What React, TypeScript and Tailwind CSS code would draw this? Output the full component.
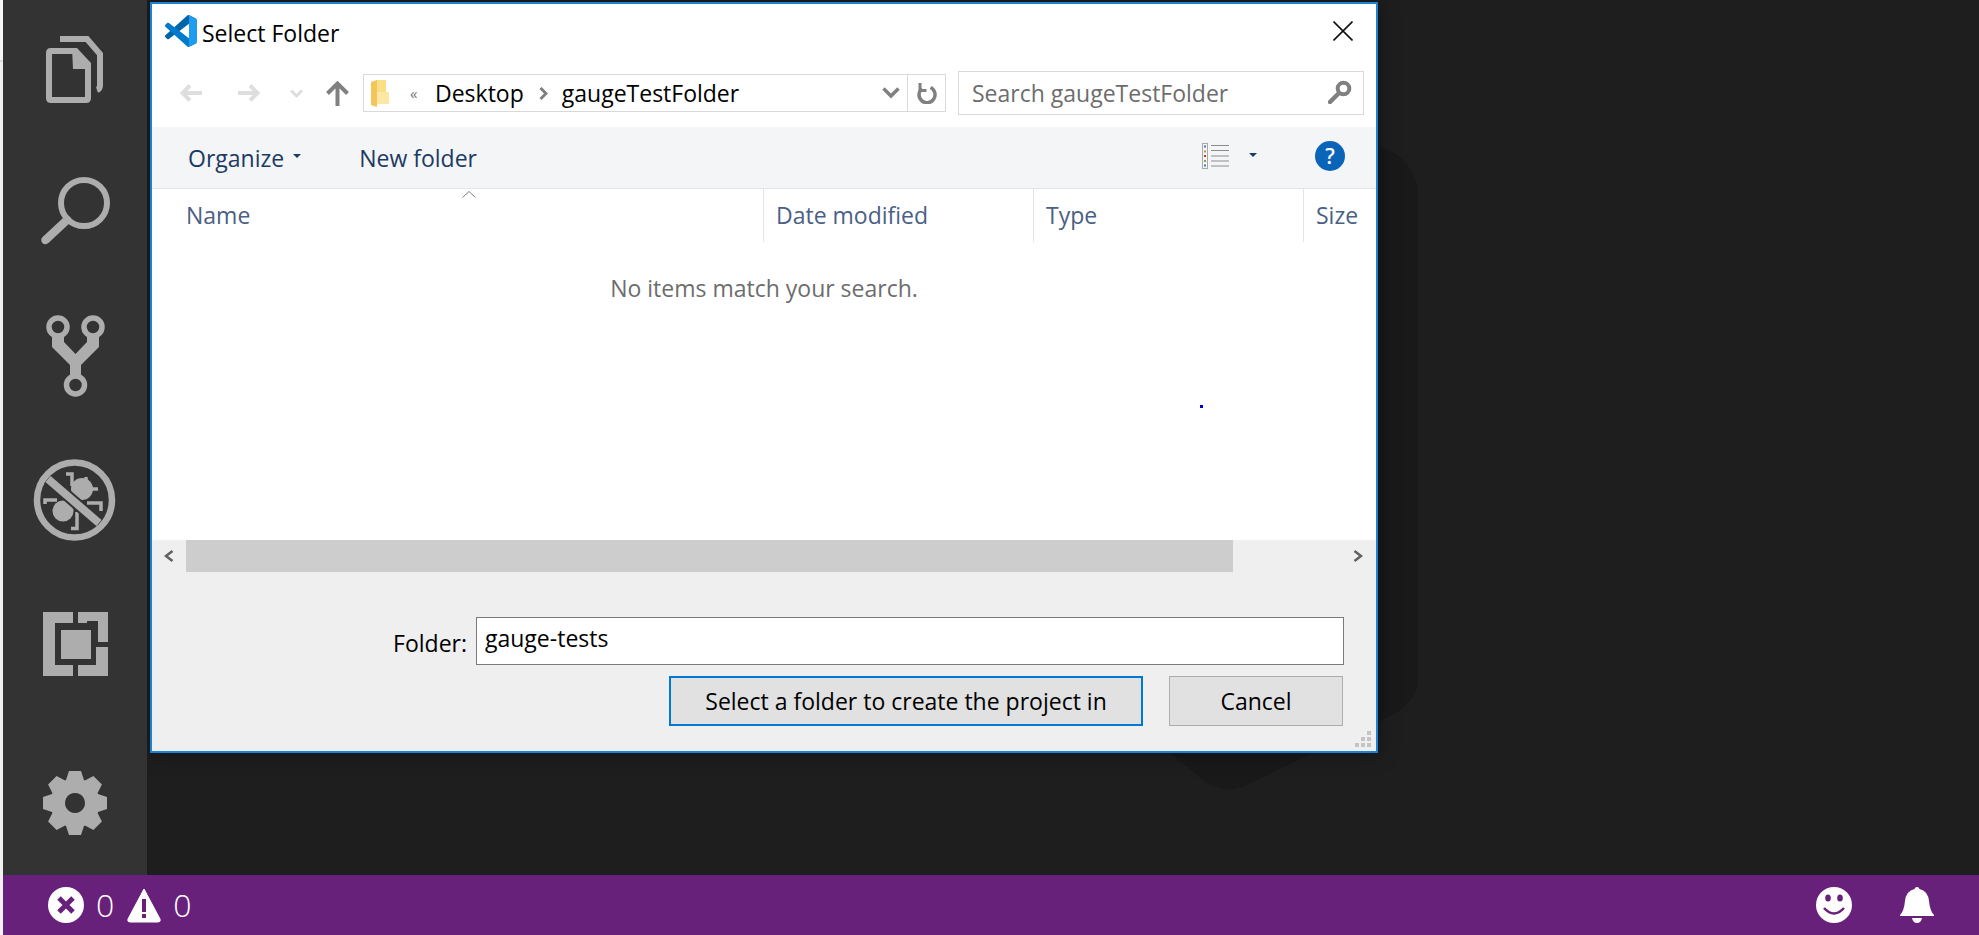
import React from 'react';

const FONT = "font-['Open_Sans',sans-serif]";

// gear outline, built once from the tooth count
const gearPath = (() => {
  const pts: string[] = [];
  const cx = 40;
  const cy = 40;
  for (let i = 0; i < 8; i++) {
    const a = (i * Math.PI) / 4 - Math.PI / 2;
    const at = (r: number, off: number) => {
      const x = cx + r * Math.cos(a) - off * Math.sin(a);
      const y = cy + r * Math.sin(a) + off * Math.cos(a);
      return `${x.toFixed(1)} ${y.toFixed(1)}`;
    };
    pts.push(at(23, -9), at(32, -6), at(32, 6), at(23, 9));
  }
  return `M${pts.join('L')}Z M40 30a10 10 0 1 0 .01 0Z`;
})();

const ActivityItem = ({ h, children }: { h: string; children: React.ReactNode }) => (
  <div className={`flex items-center justify-center ${h}`}>{children}</div>
);

const ActivityBar = () => (
  <div className="flex w-[144px] shrink-0 flex-col bg-[#333333]">
    <ActivityItem h="h-[140px]">
      <svg width="80" height="80" viewBox="35 30 80 80" fill="none" stroke="#adadad" strokeWidth="6">
        <path d="M60 39H87L100 54V85Q100 89 97 90" />
        <path d="M74 51H51Q49 51 49 53V98Q49 100 51 100H86Q88 100 88 98V66" />
        <path d="M72 48H77L91 63V69H73Z" fill="#adadad" stroke="none" />
      </svg>
    </ActivityItem>
    <ActivityItem h="h-[144px]">
      <svg width="80" height="80" viewBox="35 172 80 80" fill="none" stroke="#adadad">
        <circle cx="84" cy="203" r="23" strokeWidth="6" />
        <path d="M67 220L45.5 240" strokeWidth="8.5" strokeLinecap="round" />
      </svg>
    </ActivityItem>
    <ActivityItem h="h-[144px]">
      <svg width="80" height="90" viewBox="35 311 80 90" fill="none" stroke="#adadad" strokeWidth="5.5">
        <circle cx="58" cy="327" r="9" />
        <circle cx="93" cy="327" r="9" />
        <circle cx="75.5" cy="385" r="9" />
        <path d="M52 335H64V342L75.500 354L87 342V335H99V347L81 365V377H70V365L52 347Z" fill="#adadad" stroke="none" />
      </svg>
    </ActivityItem>
    <ActivityItem h="h-[144px]">
      <svg width="90" height="90" viewBox="31 455 90 90" fill="none">
        <circle cx="75.500" cy="500" r="37.500" stroke="#adadad" strokeWidth="6.500" />
        <circle cx="64" cy="511" r="10.500" fill="#adadad" />
        <circle cx="83" cy="489" r="11" fill="#adadad" />
        <path d="M67 474H73V486M87 477V489H99M102 511V503H88M46 504V500H58M72 528.500H78V512" stroke="#adadad" strokeWidth="3.500" />
        <path d="M49 479L100 523" stroke="#333333" strokeWidth="12" />
        <path d="M49 479L100 523" stroke="#adadad" strokeWidth="8" />
      </svg>
    </ActivityItem>
    <ActivityItem h="h-[144px]">
      <svg width="80" height="80" viewBox="35 604 80 80" fill="#adadad">
        <path d="M43 612H73V623H55V665H73V676H43Z" />
        <path d="M78 612H108V642H98V621H87V623H78Z" />
        <path d="M78 665H96V647H108V676H78Z" />
        <rect x="61" y="630" width="30" height="29" />
      </svg>
    </ActivityItem>
    <div className="flex-1" />
    <ActivityItem h="h-[144px]">
      <svg width="80" height="80" viewBox="0 0 80 80">
        <path d={gearPath} fill="#adadad" fillRule="evenodd" />
      </svg>
    </ActivityItem>
  </div>
);

const StatusBar = () => (
  <div className={`flex h-[60px] shrink-0 items-center bg-[#68217a] pl-[45px] pr-[45px] text-[32px] font-light text-white ${FONT}`}>
    <svg width="36" height="36" viewBox="0 0 36 36">
      <circle cx="18" cy="18" r="18" fill="#fff" />
      <path d="M11 11L25 25M25 11L11 25" stroke="#68217a" strokeWidth="5" />
    </svg>
    <span className="ml-[12px]">0</span>
    <svg className="ml-[12px]" width="36" height="36" viewBox="0 0 36 36">
      <path d="M18 2L34 32Q35 35 32 35H4Q1 35 2 32Z" fill="#fff" stroke="#fff" strokeWidth="1" strokeLinejoin="round" />
      <rect x="16" y="12" width="4" height="13" fill="#68217a" />
      <rect x="16" y="27" width="4" height="4" fill="#68217a" />
    </svg>
    <span className="ml-[11px]">0</span>
    <div className="flex-1" />
    <svg width="36" height="36" viewBox="0 0 36 36">
      <circle cx="18" cy="18" r="18" fill="#fff" />
      <ellipse cx="12" cy="11" rx="2.800" ry="3.500" fill="#68217a" />
      <ellipse cx="24" cy="11" rx="2.800" ry="3.500" fill="#68217a" />
      <path d="M8 21Q18 32 28 21" fill="none" stroke="#68217a" strokeWidth="2.500" />
    </svg>
    <svg className="ml-[48px]" width="34" height="36" viewBox="0 0 34 36" fill="#fff">
      <path d="M17 0Q19 0 19.500 2Q28 4 29 14Q30 24 34 28V29H0V28Q4 24 5 14Q6 4 14.500 2Q15 0 17 0Z" />
      <path d="M12 31H22Q21 36 17 36Q13 36 12 31Z" />
    </svg>
  </div>
);

const SelectFolderDialog = () => (
  <div className={`absolute left-[3px] top-[2px] flex h-[751px] w-[1228px] flex-col border-2 border-[#1883d7] bg-white text-[23px] shadow-[0_0_20px_rgba(0,0,0,0.4)] ${FONT}`}>
    {/* Title */}
    <div className="flex h-[67px] shrink-0 items-start pl-[13px] pt-[11px]">
      <svg width="32" height="32" viewBox="0 0 100 100">
        <path fill="#0065A9" d="M96.4614 10.7962L75.8569 0.875542C73.4719 -0.272773 70.6217 0.211611 68.75 2.08333L1.29858 63.5832C-0.515693 65.2373 -0.513607 68.0937 1.30308 69.7452L6.81272 74.754C8.29793 76.1042 10.5347 76.2036 12.1338 74.9905L93.3609 13.3699C96.086 11.3026 100 13.2462 100 16.6667V16.4275C100 14.0265 98.6246 11.8378 96.4614 10.7962Z" />
        <path fill="#007ACC" d="M96.4614 89.2038L75.8569 99.1245C73.4719 100.273 70.6217 99.7884 68.75 97.9167L1.29858 36.4168C-0.515693 34.7627 -0.513607 31.9063 1.30308 30.2548L6.81272 25.246C8.29793 23.8958 10.5347 23.7964 12.1338 25.0095L93.3609 86.6301C96.086 88.6974 100 86.7538 100 83.3333V83.5725C100 85.9735 98.6246 88.1622 96.4614 89.2038Z" />
        <path fill="#1F9CF0" d="M75.8578 99.1263C73.4721 100.274 70.6219 99.7885 68.75 97.9166C71.0564 100.223 75 98.5895 75 95.3278V4.67213C75 1.41039 71.0564 -0.223106 68.75 2.08329C70.6219 0.211402 73.4721 -0.273666 75.8578 0.873633L96.4587 10.7807C98.6234 11.8217 100 14.0112 100 16.4132V83.5871C100 85.9891 98.6234 88.1786 96.4586 89.2196L75.8578 99.1263Z" />
      </svg>
      <span className="ml-[5px] mt-[2px] leading-[32px] text-black">Select Folder</span>
      <div className="flex-1" />
      <svg className="mr-[23px] mt-[6px]" width="20" height="20" viewBox="0 0 20 20" stroke="#111" strokeWidth="1.600">
        <path d="M0.500 0.500L19.500 19.500M19.500 0.500L0.500 19.500" />
      </svg>
    </div>

    {/* Address row */}
    <div className="flex h-[44px] shrink-0 items-center pl-[28px]">
      <svg width="22" height="18" viewBox="0 0 22 18" fill="none" stroke="#dedede" strokeWidth="4">
        <path d="M10 1.500L2.500 9L10 16.500M3 9H22" />
      </svg>
      <svg className="ml-[36px]" width="22" height="18" viewBox="0 0 22 18" fill="none" stroke="#dedede" strokeWidth="4">
        <path d="M12 1.500L19.500 9L12 16.500M19 9H0" />
      </svg>
      <svg className="ml-[30px]" width="13" height="9" viewBox="0 0 13 9" fill="none" stroke="#dedede" strokeWidth="3">
        <path d="M1 1.500L6.500 7L12 1.500" />
      </svg>
      <svg className="ml-[23px]" width="23" height="25" viewBox="0 0 23 25" fill="none" stroke="#808080" strokeWidth="4">
        <path d="M1.500 12.500L11.500 2.500L21.500 12.500M11.500 3V25" />
      </svg>
      <div className="ml-[14px] flex h-[38px] w-[583px] items-center border border-[#d9d9d9] text-black">
        <svg className="ml-[7px]" width="18" height="27" viewBox="0 0 18 27">
          <path d="M6 0H15V21H18V24H6Z" fill="#fbdf85" />
          <path d="M0 2L6 0V27L0 25Z" fill="#f4c65a" />
          <path d="M6 12H18V24H6Z" fill="#fce7a5" />
        </svg>
        <span className="ml-[21px] w-[9px] text-[15px] leading-none text-[#777]">«</span>
        <span className="ml-[16px] mt-[1px]">Desktop</span>
        <svg className="ml-[15px]" width="9" height="13" viewBox="0 0 9 13" fill="none" stroke="#808080" strokeWidth="3">
          <path d="M1.500 1L7 6.500L1.500 12" />
        </svg>
        <span className="ml-[14px] mt-[1px]">gaugeTestFolder</span>
        <div className="flex-1" />
        <svg className="mr-[7px]" width="18" height="12" viewBox="0 0 18 12" fill="none" stroke="#808080" strokeWidth="3.500">
          <path d="M1.500 1.500L9 9L16.500 1.500" />
        </svg>
        <div className="flex h-full w-[38px] items-center justify-center border-l border-[#d9d9d9]">
          <svg width="20" height="21" viewBox="0 0 20 21" fill="none" stroke="#808080" strokeWidth="3.500">
            <path d="M13.500 4.500A8 8 0 1 1 5 5.500" />
            <path d="M3 0V7.500H9.500" strokeWidth="3" />
          </svg>
        </div>
      </div>
      <div className="ml-[12px] flex h-[44px] w-[406px] items-center border border-[#d9d9d9] pl-[13px] pr-[11px] text-[#6d6d6d]">
        <span className="mt-[1px]">Search gaugeTestFolder</span>
        <div className="flex-1" />
        <svg className="mt-[-3px]" width="24" height="24" viewBox="0 0 24 24" fill="none" stroke="#808080">
          <circle cx="15.500" cy="8.500" r="5.800" strokeWidth="4" />
          <path d="M10.500 13.500L2 22" strokeWidth="4.500" strokeLinecap="round" />
        </svg>
      </div>
    </div>

    {/* Toolbar */}
    <div className="mt-[12px] flex h-[62px] shrink-0 items-center border-b border-[#e4e5e7] bg-[#f4f5f7] pl-[36px] text-[#1c3a63]">
      <span className="mt-[1px]">Organize</span>
      <span className="ml-[9px] mt-[-3px] h-0 w-0 border-x-[4px] border-t-[4px] border-x-transparent border-t-[#1c3a63]" />
      <span className="ml-[58px] mt-[1px]">New folder</span>
      <div className="flex-1" />
      <svg className="mt-[-3px]" width="27" height="26" viewBox="0 0 27 26" fill="none">
        <rect x="0.500" y="0.500" width="5" height="25" stroke="#a8a8a8" />
        <rect x="2" y="2.500" width="2" height="2" fill="#3f7fc0" />
        <rect x="2" y="7.500" width="2" height="2" fill="#b59a2e" />
        <rect x="2" y="12" width="2" height="2" fill="#c0392b" />
        <rect x="2" y="17" width="2" height="2" fill="#8aa05a" />
        <rect x="2" y="21.500" width="2" height="2" fill="#3f7fc0" />
        <path d="M9 2.500H27M9 7.500H27M9 13H27M9 18H27M9 23H27" stroke="#8c8c8c" strokeWidth="1" />
      </svg>
      <span className="ml-[20px] mt-[-5px] h-0 w-0 border-x-[4px] border-t-[4px] border-x-transparent border-t-[#1c3a63]" />
      <div className="ml-[58px] mr-[31px] mt-[-3px] flex h-[30px] w-[30px] items-center justify-center rounded-full bg-[#0a64b8] text-[21px] font-semibold leading-none text-white">?</div>
    </div>

    {/* Column headers */}
    <div className="relative flex h-[53px] shrink-0 text-[#4a6085]">
      <svg className="absolute left-[310px] top-[2px]" width="14" height="7" viewBox="0 0 14 7" fill="none" stroke="#808080" strokeWidth="1">
        <path d="M0.500 6.500L7 0.500L13.500 6.500" />
      </svg>
      <div className="flex w-[612px] items-center border-r border-[#e5e5e5] pl-[34px]">Name</div>
      <div className="flex w-[270px] items-center border-r border-[#e5e5e5] pl-[12px]">Date modified</div>
      <div className="flex w-[270px] items-center border-r border-[#e5e5e5] pl-[12px]">Type</div>
      <div className="flex flex-1 items-center pl-[12px]">Size</div>
    </div>

    {/* File list */}
    <div className="relative flex-1 pt-[31px] text-center leading-[30px] text-[#6d6d6d]">
      No items match your search.
      <span className="absolute left-[1048px] top-[163px] h-[3px] w-[3px] bg-[#0000d0]" />
    </div>

    {/* Horizontal scrollbar */}
    <div className="flex h-[32px] shrink-0 items-center bg-[#efefef]">
      <div className="flex h-full w-[34px] items-center justify-center">
        <svg width="10" height="12" viewBox="0 0 10 12" fill="none" stroke="#606060" strokeWidth="2.500">
          <path d="M8.500 1L2 6L8.500 11" />
        </svg>
      </div>
      <div className="h-full w-[1047px] bg-[#cdcdcd]" />
      <div className="flex-1" />
      <svg className="mr-[13px]" width="10" height="12" viewBox="0 0 10 12" fill="none" stroke="#606060" strokeWidth="2.500">
        <path d="M1.500 1L8 6L1.500 11" />
      </svg>
    </div>

    {/* Footer */}
    <div className="relative flex h-[179px] shrink-0 flex-col items-end bg-[#efefef] pr-[32px] pt-[45px] text-black">
      <div className="flex items-center">
        <span className="mr-[9px] mt-[4px]">Folder:</span>
        <input
          readOnly
          value="gauge-tests"
          className="h-[48px] w-[868px] border border-[#7a7a7a] bg-white pb-[7px] pl-[8px] outline-none"
        />
      </div>
      <div className="mr-[1px] mt-[11px] flex">
        <button className="h-[50px] w-[474px] border-2 border-[#0078d7] bg-[#e1e1e1]">Select a folder to create the project in</button>
        <button className="ml-[26px] h-[50px] w-[174px] border border-[#adadad] bg-[#e1e1e1]">Cancel</button>
      </div>
      <svg className="absolute bottom-[4px] right-[5px]" width="16" height="16" viewBox="0 0 16 16" fill="#c4c4c4">
        <rect x="12" y="0" width="4" height="4" />
        <rect x="6" y="6" width="4" height="4" />
        <rect x="12" y="6" width="4" height="4" />
        <rect x="0" y="12" width="4" height="4" />
        <rect x="6" y="12" width="4" height="4" />
        <rect x="12" y="12" width="4" height="4" />
      </svg>
    </div>
  </div>
);

export default function App() {
  return (
    <div className="flex h-screen w-full overflow-hidden">
      {/* sliver of the window behind */}
      <div className="flex w-[3px] shrink-0 flex-col bg-[#f1f1f1]">
        <div className="h-[62px] border-b-2 border-[#dcdcdc] bg-[#f6f6f6]" />
      </div>
      <div className="flex min-w-0 flex-1 flex-col">
        <div className="flex min-h-0 flex-1">
          <ActivityBar />
          <div className="relative flex-1 overflow-hidden bg-[#1e1e1e]">
            <svg className="absolute left-[953px] top-[100px]" width="400" height="720" viewBox="1100 100 400 720">
              <path
                d="M1100 120L1378 147C1400 152 1418 170 1418 196V677C1418 700 1402 712 1377 722L1312 753L1247 785C1232 792 1215 790 1203 780L1170 753H1100Z"
                fill="#191919"
              />
            </svg>
            <SelectFolderDialog />
          </div>
        </div>
        <StatusBar />
      </div>
    </div>
  );
}
